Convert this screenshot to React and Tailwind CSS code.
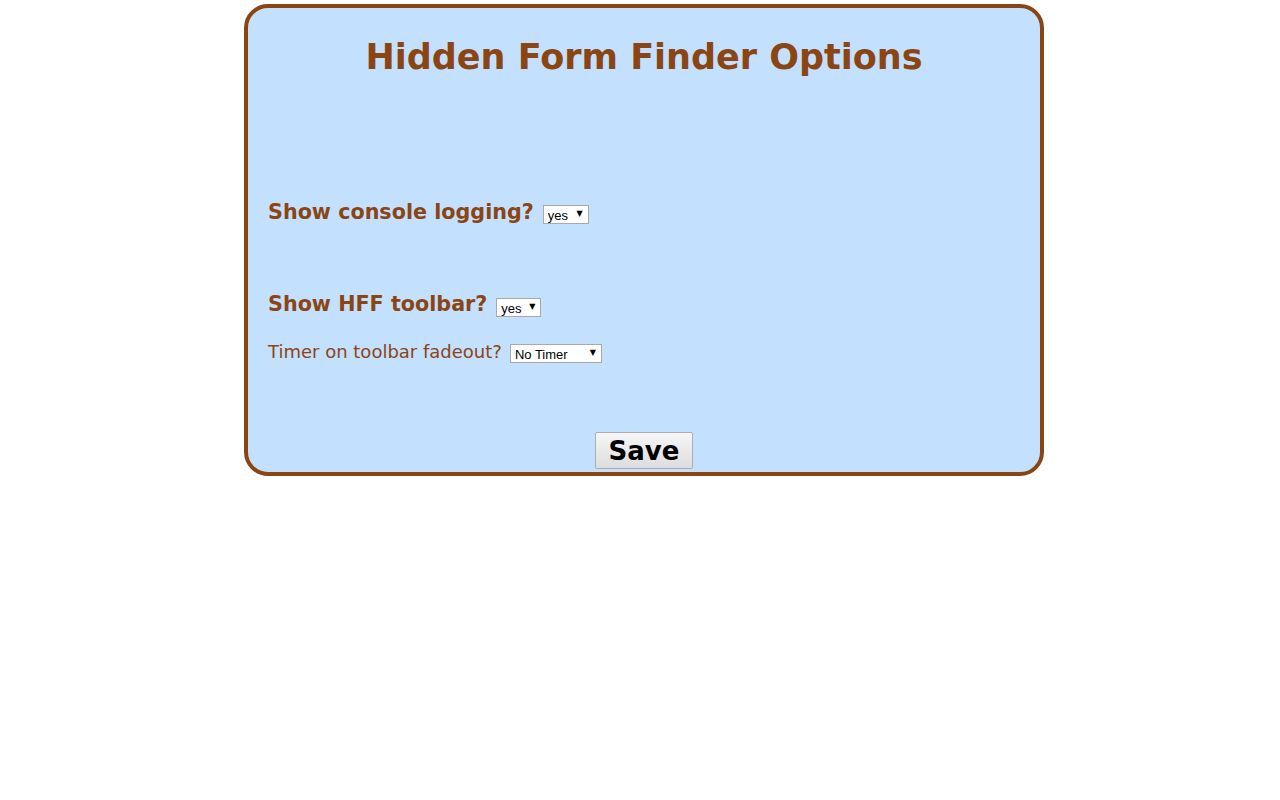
import React from "react";

const font = { fontFamily: '"DejaVu Sans", Verdana, sans-serif' };

const Dropdown = ({ value, width, offset }) => (
  <span className={`relative inline-block ${width} ${offset}`}>
    <select
      defaultValue={value}
      className="block appearance-none w-full h-[19px] bg-white border border-[#a9a9a9] pl-[4px] pt-[1px] text-[13px] leading-[17px] text-black font-['Liberation_Sans',Arial,sans-serif] outline-none"
    >
      <option>{value}</option>
    </select>
    <span className="pointer-events-none absolute inset-y-0 right-[6px] flex items-center text-[8px] text-black font-['DejaVu_Sans',sans-serif]">
      ▼
    </span>
  </span>
);

export default function App() {
  return (
    <div className="min-h-screen bg-white pt-1 pl-2" style={font}>
      <div className="mx-auto w-[800px] h-[472px] rounded-[24px] border-4 border-[#8b4513] bg-[#c3e1ff] overflow-hidden px-5">
        <h1 className="text-center font-bold text-[35px] leading-[44px] text-[#8b4513] mt-[27px]">
          Hidden Form Finder Options
        </h1>

        <div className="mt-[121px] flex items-center gap-[9px] h-[24px]">
          <span className="font-bold text-[20.7px] leading-[24px] text-[#8b4513]">Show console logging?</span>
          <Dropdown value="yes" width="w-[46px]" offset="mt-[4px]" />
        </div>

        <div className="mt-[68px] flex items-center gap-[9px] h-[24px]">
          <span className="font-bold text-[20.7px] leading-[24px] text-[#8b4513]">Show HFF toolbar?</span>
          <Dropdown value="yes" width="w-[45px]" offset="mt-[6px]" />
        </div>

        <div className="mt-[25px] flex items-center gap-[8px] h-[22px]">
          <span className="text-[18px] leading-[22px] text-[#8b4513]">Timer on toolbar fadeout?</span>
          <Dropdown value="No Timer" width="w-[92px]" offset="mt-[2px]" />
        </div>

        <div className="mt-[69px] flex justify-center">
          <button className="w-[98px] h-[37px] border border-[#adadad] rounded-[2px] bg-gradient-to-b from-[#f6f6f6] to-[#dddddd] text-[26px] font-bold text-black leading-none">
            Save
          </button>
        </div>
      </div>
    </div>
  );
}
